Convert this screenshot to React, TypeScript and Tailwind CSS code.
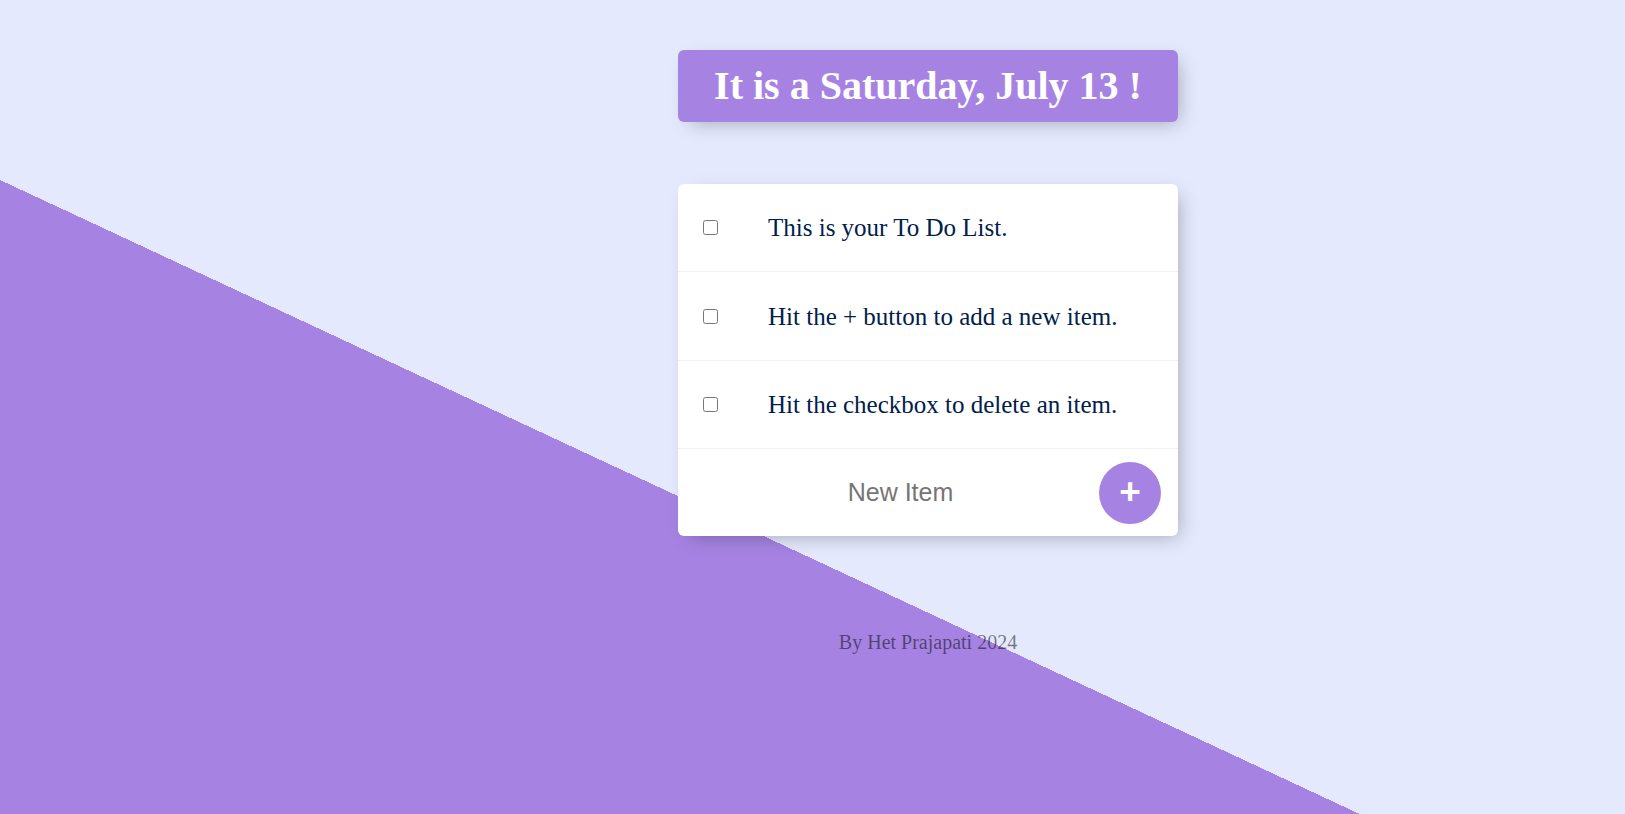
import React from "react";

const items = [
  "This is your To Do List.",
  "Hit the + button to add a new item.",
  "Hit the checkbox to delete an item.",
];

export default function App() {
  return (
    <div className="h-[814px] w-full overflow-hidden bg-[#E4E9FD] bg-[linear-gradient(25deg,#A683E3_40.34%,#E4E9FD_40.34%)] font-['Liberation_Serif',serif]">
      <div className="flex flex-col items-center pl-[231px]">
        <div className="mt-[50px] flex h-[72px] w-[500px] items-center justify-center rounded-[6px] bg-[#A683E3] shadow-[6px_6px_19px_-6px_rgba(0,0,0,0.3)]">
          <h1 className="text-[40px] font-bold leading-[46px] text-white">
            It is a Saturday, July 13 !
          </h1>
        </div>

        <div className="mt-[62px] w-[500px] rounded-[6px] bg-white shadow-[6px_6px_19px_-6px_rgba(0,0,0,0.3)]">
          {items.map((t) => (
            <div
              key={t}
              className="flex h-[88.4px] items-center border-b border-[#F1F1F1]"
            >
              <input
                type="checkbox"
                className="m-0 ml-[25px] h-[15px] w-[15px]"
              />
              <p className="ml-[50px] text-[25px] leading-[29px] text-[#00204a]">
                {t}
              </p>
            </div>
          ))}
          <div className="flex h-[86.8px] items-center">
            <input
              type="text"
              placeholder="New Item"
              className="ml-[27px] h-[75px] w-[391px] bg-transparent text-center font-['Liberation_Sans',Arial,sans-serif] text-[25px] outline-none placeholder:text-[#757575]"
            />
            <button className="ml-[3px] flex h-[62px] w-[62px] items-center justify-center rounded-full bg-[#A683E3] pb-[3px] font-['Liberation_Sans',Arial,sans-serif] text-[37px] font-bold leading-none text-white">
              +
            </button>
          </div>
        </div>

        <footer className="mt-[95px] text-center text-[20px] leading-[23px] text-black/50">
          By Het Prajapati 2024
        </footer>
      </div>
    </div>
  );
}
